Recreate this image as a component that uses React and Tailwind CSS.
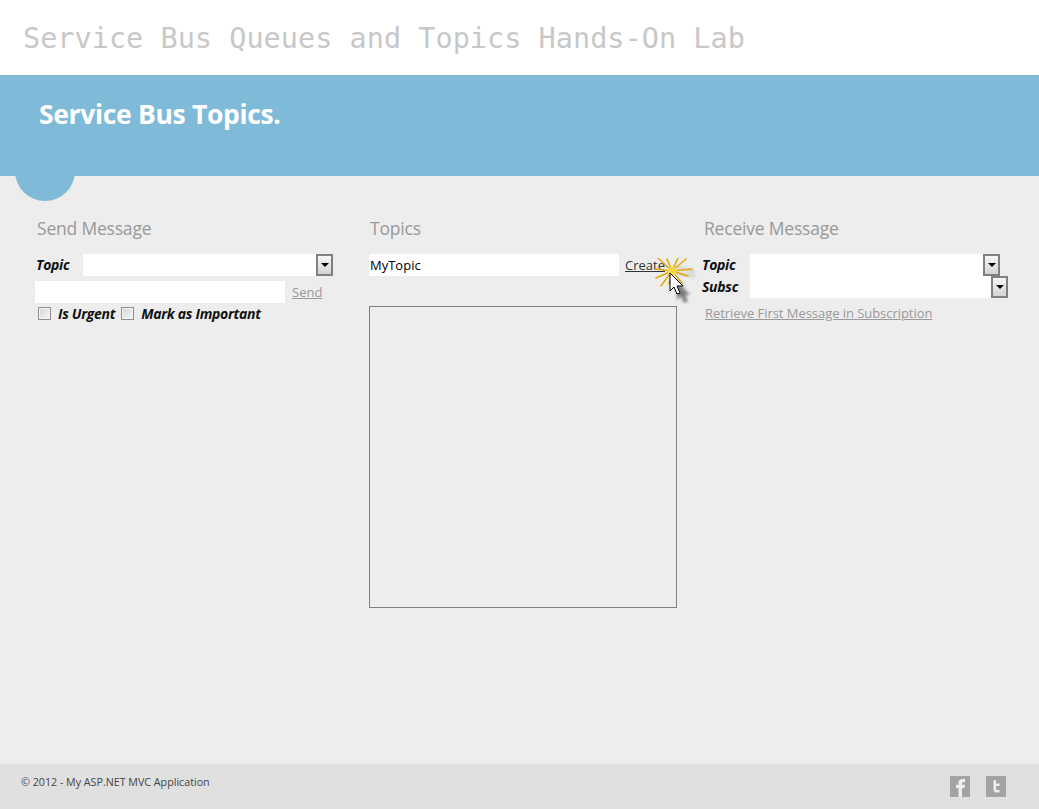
import React from "react";

function Select({ className }) {
  return (
    <div className={`flex h-[22px] bg-white ${className}`}>
      <div className="flex-1" />
      <div className="w-[17px] h-[22px] border-2 border-[#808080] bg-gradient-to-b from-[#f6f6f6] to-[#d4d4d4] flex items-center justify-center">
        <div className="w-0 h-0 mb-[1px] border-l-[4px] border-r-[4px] border-t-[4px] border-l-transparent border-r-transparent border-t-black" />
      </div>
    </div>
  );
}

function Check({ className = "" }) {
  return <div className={`w-[13px] h-[13px] -mt-[2px] border border-[#8e8e8e] bg-gradient-to-br from-[#d8d8d8] to-[#f4f4f4] shadow-[inset_0_0_0_1px_#f4f4f4] ${className}`} />;
}

function Cursor() {
  const rays = [[3, 0], [12, 1], [23, 0], [31, 1], [0, 11], [37, 11], [33, 18], [1, 20], [27, 25], [6, 28], [14, 26]];
  return (
    <svg className="absolute left-[655px] top-[258px]" width="44" height="46" viewBox="0 0 44 46">
      <defs>
        <filter id="b" x="-50%" y="-50%" width="200%" height="200%"><feGaussianBlur stdDeviation="1.8" /></filter>
      </defs>
      <path d="M22 9 L40 14 M22 16 L40 18 M20 22 L30 28" stroke="#555" strokeWidth="1.5" opacity="0.35" filter="url(#b)" />
      <g stroke="#e6a90c" strokeWidth="1.6" strokeLinecap="round">
        {rays.map(([x, y], i) => <line key={i} x1={x} y1={y} x2="17" y2="13" />)}
      </g>
      <circle cx="17" cy="13" r="4.5" fill="#f6d64a" />
      <path d="M19 20 v19 l4-4 l3 7 l4-2 l-3-6 h5 z" fill="#333" opacity="0.6" filter="url(#b)" transform="translate(3,3)" />
      <path d="M15 15 v18 l4-4 l3 7 l3-1 l-3-7 h6 z" fill="#fff" stroke="#000" strokeWidth="1" strokeLinejoin="round" />
    </svg>
  );
}

const headingCls = "text-[17.5px] leading-[24px] text-[#999999] tracking-[-0.2px]";
const labelCls = "font-bold italic text-[14px] leading-[22px] text-[#111111] tracking-[-0.3px]";
const linkCls = "underline text-[13px] leading-[22px] text-[#999999]";

export default function App() {
  return (
    <div className="relative min-h-[809px] flex flex-col bg-[#ededed] overflow-hidden font-['Open_Sans','Noto_Sans',sans-serif]">
      <header className="h-[75px] bg-white pl-[23px] pt-[20px]">
        <div className="font-['DejaVu_Sans_Mono',monospace] text-[28.55px] leading-[36px] text-[#c8c8c8]">
          Service Bus Queues and Topics Hands-On Lab
        </div>
      </header>

      <section className="relative h-[101px] bg-[#7fbbd9] pl-[39px] pt-[21px]">
        <h1 className="font-bold text-[26.5px] leading-[36px] text-white tracking-[-0.33px]">Service Bus Topics.</h1>
        <div className="absolute left-[15px] top-[66px] w-[60px] h-[60px] rounded-full bg-[#7fbbd9]" />
      </section>

      <main className="flex-1 grid grid-cols-[334px_334px_336px] pl-[35px] pt-[40px]">
        <div>
          <h2 className={`${headingCls} ml-[2px]`}>Send Message</h2>
          <div className="flex mt-[14px]">
            <span className={`${labelCls} w-[47px] ml-[1px] shrink-0`}>Topic</span>
            <Select className="w-[250px]" />
          </div>
          <div className="flex items-center mt-[5px]">
            <div className="w-[250px] h-[22px] bg-white" />
            <a className={`${linkCls} ml-[7px]`}>Send</a>
          </div>
          <div className="flex items-center h-[22px]">
            <Check className="ml-[3px]" />
            <span className={`${labelCls} ml-[7px]`}>Is Urgent</span>
            <Check className="ml-[6px]" />
            <span className={`${labelCls} ml-[7px]`}>Mark as Important</span>
          </div>
        </div>

        <div>
          <h2 className={`${headingCls} ml-[1px]`}>Topics</h2>
          <div className="flex items-center mt-[14px]">
            <div className="w-[250px] h-[22px] bg-white pl-[1px] text-[13px] leading-[22px] text-black">MyTopic</div>
            <a className="underline text-[13px] leading-[22px] text-[#333333] ml-[6px]">Create</a>
          </div>
          <div className="mt-[30px] w-[308px] h-[302px] border border-[#808080]" />
        </div>

        <div>
          <h2 className={`${headingCls} ml-[1px]`}>Receive Message</h2>
          <div className="flex mt-[14px]">
            <span className={`${labelCls} w-[48px] -ml-[1px] shrink-0`}>Topic</span>
            <Select className="w-[250px]" />
          </div>
          <div className="flex">
            <span className={`${labelCls} w-[48px] -ml-[1px] shrink-0`}>Subsc</span>
            <Select className="w-[258px]" />
          </div>
          <a className={`${linkCls} block ml-[2px] mt-[4px] tracking-[-0.05px]`}>Retrieve First Message in Subscription</a>
        </div>
      </main>

      <footer className="h-[45px] bg-[#e0e0e0] flex items-start justify-between pl-[21px] pr-[33px]">
        <p className="text-[10.7px] leading-[14px] mt-[11px] text-[#444444]">© 2012 - My ASP.NET MVC Application</p>
        <div className="flex gap-[16px] mt-[12px]">
          <svg width="20" height="21" viewBox="0 0 20 21" role="img" aria-label="Facebook">
            <rect width="20" height="21" fill="#a3a3a3" />
            <path d="M8.5 21 V12 H6 V8.7 H8.5 V6.8 C8.5 4.2 10 3 12.2 3 H15 V6.2 H13.3 C12.3 6.2 12 6.7 12 7.5 V8.7 H15 L14.5 12 H12 V21 Z" fill="#eeeeee" />
          </svg>
          <svg width="20" height="21" viewBox="0 0 20 21" role="img" aria-label="Twitter">
            <rect width="20" height="21" fill="#a3a3a3" />
            <path d="M7.5 4 H10 V7.5 H13.5 V10 H10 V12.5 C10 13.6 10.6 14 11.5 14 H13.5 V16.5 H10.5 C8.5 16.5 7.5 15.2 7.5 13 Z" fill="#eeeeee" />
          </svg>
        </div>
      </footer>

      <Cursor />
    </div>
  );
}
